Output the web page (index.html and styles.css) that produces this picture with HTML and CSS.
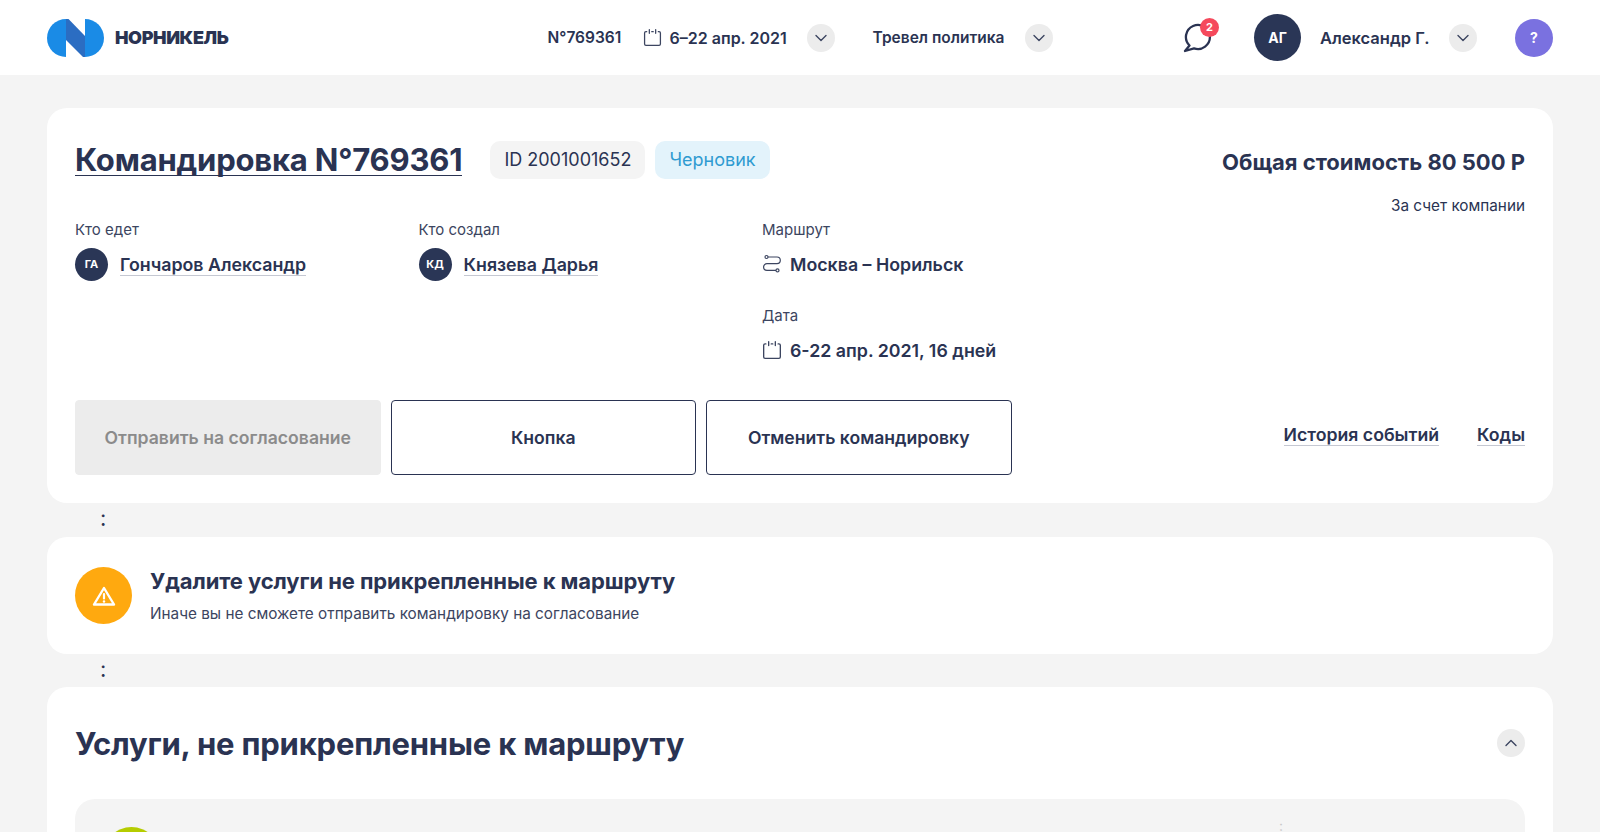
FILE: index.html
```html
<!DOCTYPE html>
<html lang="ru">
<head>
    <meta charset="UTF-8">
    <meta name="viewport" content="width=device-width, initial-scale=1.0">
    <title>Командировка N°769361</title>
    <link rel="stylesheet" href="styles.css">
</head>
<body>
    <svg class="sprite" width="0" height="0">
        <symbol id="calendar" viewBox="0 0 18 18">
            <path d="M3.500 3.500H2.800A1.300 1.300 0 0 0 1.500 4.800v10.400a1.300 1.300 0 0 0 1.300 1.300h12.400a1.300 1.300 0 0 0 1.300-1.300V4.800a1.300 1.300 0 0 0-1.300-1.300H14.500M6 1.500v3.500M12 1.500v3.500M8.300 3.500h1.400" fill="none" stroke="currentColor" stroke-width="1.200" stroke-linecap="round"/>
        </symbol>
        <symbol id="chevron" viewBox="0 0 12 8">
            <path d="M1 1.500l5 5 5-5" fill="none" stroke="currentColor" stroke-width="1.400" stroke-linecap="round" stroke-linejoin="round"/>
        </symbol>
    </svg>

    <header class="topbar">
        <div class="logo">
            <svg class="logo-mark" viewBox="0 0 57 38" width="57" height="38">
                <path d="M19 0A19 19 0 0 0 19 38Z" fill="#1a8be6"/>
                <path d="M38 0A19 19 0 0 1 38 38Z" fill="#1a8be6"/>
                <path d="M19 0h2.500L38 17V38h-2L19 21Z" fill="#2b6dc2"/>
            </svg>
            <span class="logo-text">НОРНИКЕЛЬ</span>
        </div>

        <div class="trip-nav">
            <span class="trip-number">N°769361</span>
            <svg class="trip-cal"><use href="#calendar"/></svg>
            <span class="trip-date">6–22 апр. 2021</span>
            <button class="round-btn trip-chevron"><svg><use href="#chevron"/></svg></button>
            <span class="trip-policy">Тревел политика</span>
            <button class="round-btn policy-chevron"><svg><use href="#chevron"/></svg></button>
        </div>

        <div class="user-nav">
            <div class="chat">
                <svg viewBox="0 0 30 30" width="30" height="30">
                    <path d="M6.500 22.500A12 12 0 1 1 11 25.300L2 28Z" fill="none" stroke="#2a3352" stroke-width="2.300" stroke-linejoin="round"/>
                </svg>
                <span class="chat-badge">2</span>
            </div>
            <div class="user-avatar">АГ</div>
            <span class="user-name">Александр Г.</span>
            <button class="round-btn user-chevron"><svg><use href="#chevron"/></svg></button>
            <div class="help">?</div>
        </div>
    </header>

    <main class="page">
        <section class="card trip-card">
            <div class="trip-head">
                <h1 class="trip-title">Командировка N°769361</h1>
                <span class="tag tag-id">ID 2001001652</span>
                <span class="tag tag-draft">Черновик</span>
                <div class="total">Общая стоимость 80 500 Р</div>
            </div>
            <div class="payer">За счет компании</div>

            <div class="trip-info">
                <div class="info-col">
                    <div class="info-label">Кто едет</div>
                    <div class="info-value">
                        <span class="mini-avatar">ГА</span>
                        <a class="person">Гончаров Александр</a>
                    </div>
                </div>
                <div class="info-col">
                    <div class="info-label">Кто создал</div>
                    <div class="info-value">
                        <span class="mini-avatar">КД</span>
                        <a class="person">Князева Дарья</a>
                    </div>
                </div>
                <div class="info-col">
                    <div class="info-label">Маршрут</div>
                    <div class="info-value">
                        <svg class="info-icon" viewBox="0 0 20 20">
                            <path d="M6 3h9a3.300 3.300 0 0 1 0 6.600H5A3.400 3.400 0 0 0 5 16.400h9" fill="none" stroke="currentColor" stroke-width="1.200"/>
                            <circle cx="4.500" cy="3" r="1.500" fill="#fff" stroke="currentColor" stroke-width="1.200"/>
                            <circle cx="15.500" cy="16.400" r="1.500" fill="#fff" stroke="currentColor" stroke-width="1.200"/>
                        </svg>
                        <span>Москва – Норильск</span>
                    </div>
                    <div class="info-label date-label">Дата</div>
                    <div class="info-value">
                        <svg class="info-icon"><use href="#calendar"/></svg>
                        <span>6-22 апр. 2021, 16 дней</span>
                    </div>
                </div>
            </div>

            <div class="trip-actions">
                <button class="btn btn-disabled">Отправить на согласование</button>
                <button class="btn">Кнопка</button>
                <button class="btn">Отменить командировку</button>
                <div class="trip-links">
                    <a>История событий</a>
                    <a>Коды</a>
                </div>
            </div>
        </section>

        <div class="dots">:</div>

        <section class="card alert-card">
            <div class="alert-icon">
                <svg viewBox="0 0 26 24" width="26" height="24">
                    <path d="M13 4L23 20.500H3Z" fill="none" stroke="#fff" stroke-width="2.400" stroke-linejoin="round"/>
                    <path d="M13 10v4.500" stroke="#fff" stroke-width="2.200" stroke-linecap="round"/>
                    <circle cx="13" cy="17.500" r="1.200" fill="#fff"/>
                </svg>
            </div>
            <div>
                <div class="alert-title">Удалите услуги не прикрепленные к маршруту</div>
                <div class="alert-text">Иначе вы не сможете отправить командировку на согласование</div>
            </div>
        </section>

        <div class="dots dots-second">:</div>

        <section class="card services-card">
            <div class="services-head">
                <h2 class="services-title">Услуги, не прикрепленные к маршруту</h2>
                <button class="round-btn up-chevron"><svg><use href="#chevron"/></svg></button>
            </div>
            <div class="service-item">
                <span class="service-icon"></span>
                <span class="service-dots">:</span>
            </div>
        </section>
    </main>
</body>
</html>
```

FILE: styles.css
```css
* {
    box-sizing: border-box;
}

html, body {
    height: 832px;
    overflow: hidden;
}

body {
    margin: 0;
    background: #f4f4f4;
    color: #2a3352;
    font-family: 'Inter', 'Noto Sans', sans-serif;
}

.sprite {
    position: absolute;
}

button {
    font-family: inherit;
}

/* top bar */
.topbar {
    display: flex;
    align-items: center;
    height: 75px;
    padding: 0 47px;
    background: #fff;
}

.logo {
    display: flex;
    align-items: center;
    width: 501px;
}

.logo-text {
    margin-left: 11px;
    font-size: 18px;
    font-weight: 900;
    letter-spacing: -0.4px;
}

.trip-nav {
    display: flex;
    align-items: center;
    width: 636px;
    font-size: 15.500px;
    font-weight: 600;
}

.trip-number {
    width: 95px;
}

.trip-cal {
    width: 19px;
    height: 19px;
    margin-right: 8px;
    color: #3c4560;
}

.trip-date {
    width: 137px;
    font-size: 16px;
}

.trip-policy {
    width: 152px;
    margin-left: 38px;
}

.user-nav {
    display: flex;
    align-items: center;
    font-size: 16.500px;
    font-weight: 600;
}

.round-btn {
    display: flex;
    align-items: center;
    justify-content: center;
    width: 28px;
    height: 28px;
    padding: 0;
    border: none;
    border-radius: 50%;
    background: #ececec;
    color: #3c4560;
}

.round-btn svg {
    width: 12px;
    height: 8px;
}

.chat {
    position: relative;
    width: 30px;
    height: 30px;
}

.chat-badge {
    position: absolute;
    top: -5px;
    right: -6px;
    width: 19px;
    height: 19px;
    border-radius: 50%;
    background: #f5495c;
    color: #fff;
    font-size: 11px;
    font-weight: 700;
    line-height: 19px;
    text-align: center;
}

.user-avatar {
    width: 47px;
    height: 47px;
    margin-left: 41px;
    border-radius: 50%;
    background: #2a3656;
    color: #fff;
    font-size: 14px;
    font-weight: 700;
    line-height: 47px;
    text-align: center;
}

.user-name {
    width: 129px;
    margin-left: 19px;
}

.help {
    width: 38px;
    height: 38px;
    margin-left: 38px;
    border-radius: 50%;
    background: #7a71e0;
    color: #fff;
    font-size: 14px;
    font-weight: 700;
    line-height: 38px;
    text-align: center;
}

/* cards */
.page {
    padding: 33px 47px 0;
}

.card {
    border-radius: 20px;
    background: #fff;
}

.dots {
    height: 34px;
    padding-left: 53px;
    font-size: 22px;
    line-height: 31px;
}

.dots-second {
    height: 33px;
}

.trip-card {
    height: 395px;
    padding: 33px 28px 28px;
}

.trip-head {
    display: flex;
    align-items: center;
    height: 38px;
}

.trip-title {
    margin: 0 28px 0 0;
    border-bottom: 1px solid #2a3352;
    font-size: 31px;
    font-weight: 700;
    line-height: 31px;
    letter-spacing: -0.200px;
}

.tag {
    height: 38px;
    padding: 0 14px;
    border-radius: 10px;
    font-size: 18px;
    line-height: 38px;
}

.tag-id {
    margin-right: 10px;
    background: #f4f4f4;
}

.tag-draft {
    background: #e3f3fb;
    color: #2f9bd1;
}

.total {
    margin-left: auto;
    padding-top: 4px;
    font-size: 22px;
    font-weight: 700;
}

.payer {
    margin-top: 17px;
    font-size: 15.300px;
    text-align: right;
}

.trip-info {
    display: grid;
    grid-template-columns: 343.500px 343.500px 1fr;
    height: 180px;
    margin-top: 5px;
}

.info-label {
    height: 20px;
    font-size: 15px;
    line-height: 20px;
    color: #3c4560;
}

.info-value {
    display: flex;
    align-items: center;
    height: 34px;
    margin-top: 7px;
    font-size: 17.800px;
    font-weight: 600;
}

.date-label {
    margin-top: 25px;
}

.mini-avatar {
    width: 33px;
    height: 33px;
    margin-right: 12px;
    border-radius: 50%;
    background: #2a3656;
    color: #fff;
    font-size: 11px;
    font-weight: 700;
    line-height: 33px;
    text-align: center;
}

.person {
    margin-bottom: -1px;
    border-bottom: 1px solid #c5c8d2;
}

.info-icon {
    width: 20px;
    height: 20px;
    margin-right: 8px;
    color: #3c4560;
}

.trip-actions {
    display: flex;
    align-items: flex-start;
    gap: 10px;
}

.btn {
    width: 305.500px;
    height: 75px;
    border: 1px solid #2a3352;
    border-radius: 4px;
    background: #fff;
    color: #2a3352;
    font-size: 17.600px;
    font-weight: 600;
}

.btn-disabled {
    border-color: #ececec;
    background: #ececec;
    color: #8b8b8b;
}

.trip-links {
    display: flex;
    gap: 38px;
    margin-left: auto;
    padding-top: 24px;
    font-size: 17.700px;
    font-weight: 600;
}

.trip-links a {
    border-bottom: 1px solid #c5c8d2;
}

.alert-card {
    display: flex;
    align-items: center;
    height: 117px;
    padding: 0 28px;
}

.alert-icon {
    display: flex;
    align-items: center;
    justify-content: center;
    width: 57px;
    height: 57px;
    margin-right: 18px;
    border-radius: 50%;
    background: #ffa90f;
}

.alert-title {
    font-size: 22px;
    font-weight: 700;
    line-height: 28px;
    letter-spacing: -0.100px;
}

.alert-text {
    margin-top: 8px;
    font-size: 15.300px;
    line-height: 22px;
    color: #3c4560;
}

.services-card {
    height: 300px;
    padding: 0 28px;
}

.services-head {
    display: flex;
    align-items: center;
    justify-content: space-between;
    height: 112px;
}

.services-title {
    margin: 0;
    font-size: 31px;
    font-weight: 700;
    letter-spacing: -0.200px;
}

.up-chevron svg {
    transform: rotate(180deg);
}

.service-item {
    position: relative;
    height: 200px;
    padding: 28px;
    border-radius: 20px;
    background: #f4f4f4;
}

.service-icon {
    display: block;
    width: 57px;
    height: 57px;
    border-radius: 50%;
    background: #b5cc00;
}

.service-dots {
    position: absolute;
    top: 18px;
    left: 1204px;
    font-size: 14px;
    color: #c9c9c9;
}
```
